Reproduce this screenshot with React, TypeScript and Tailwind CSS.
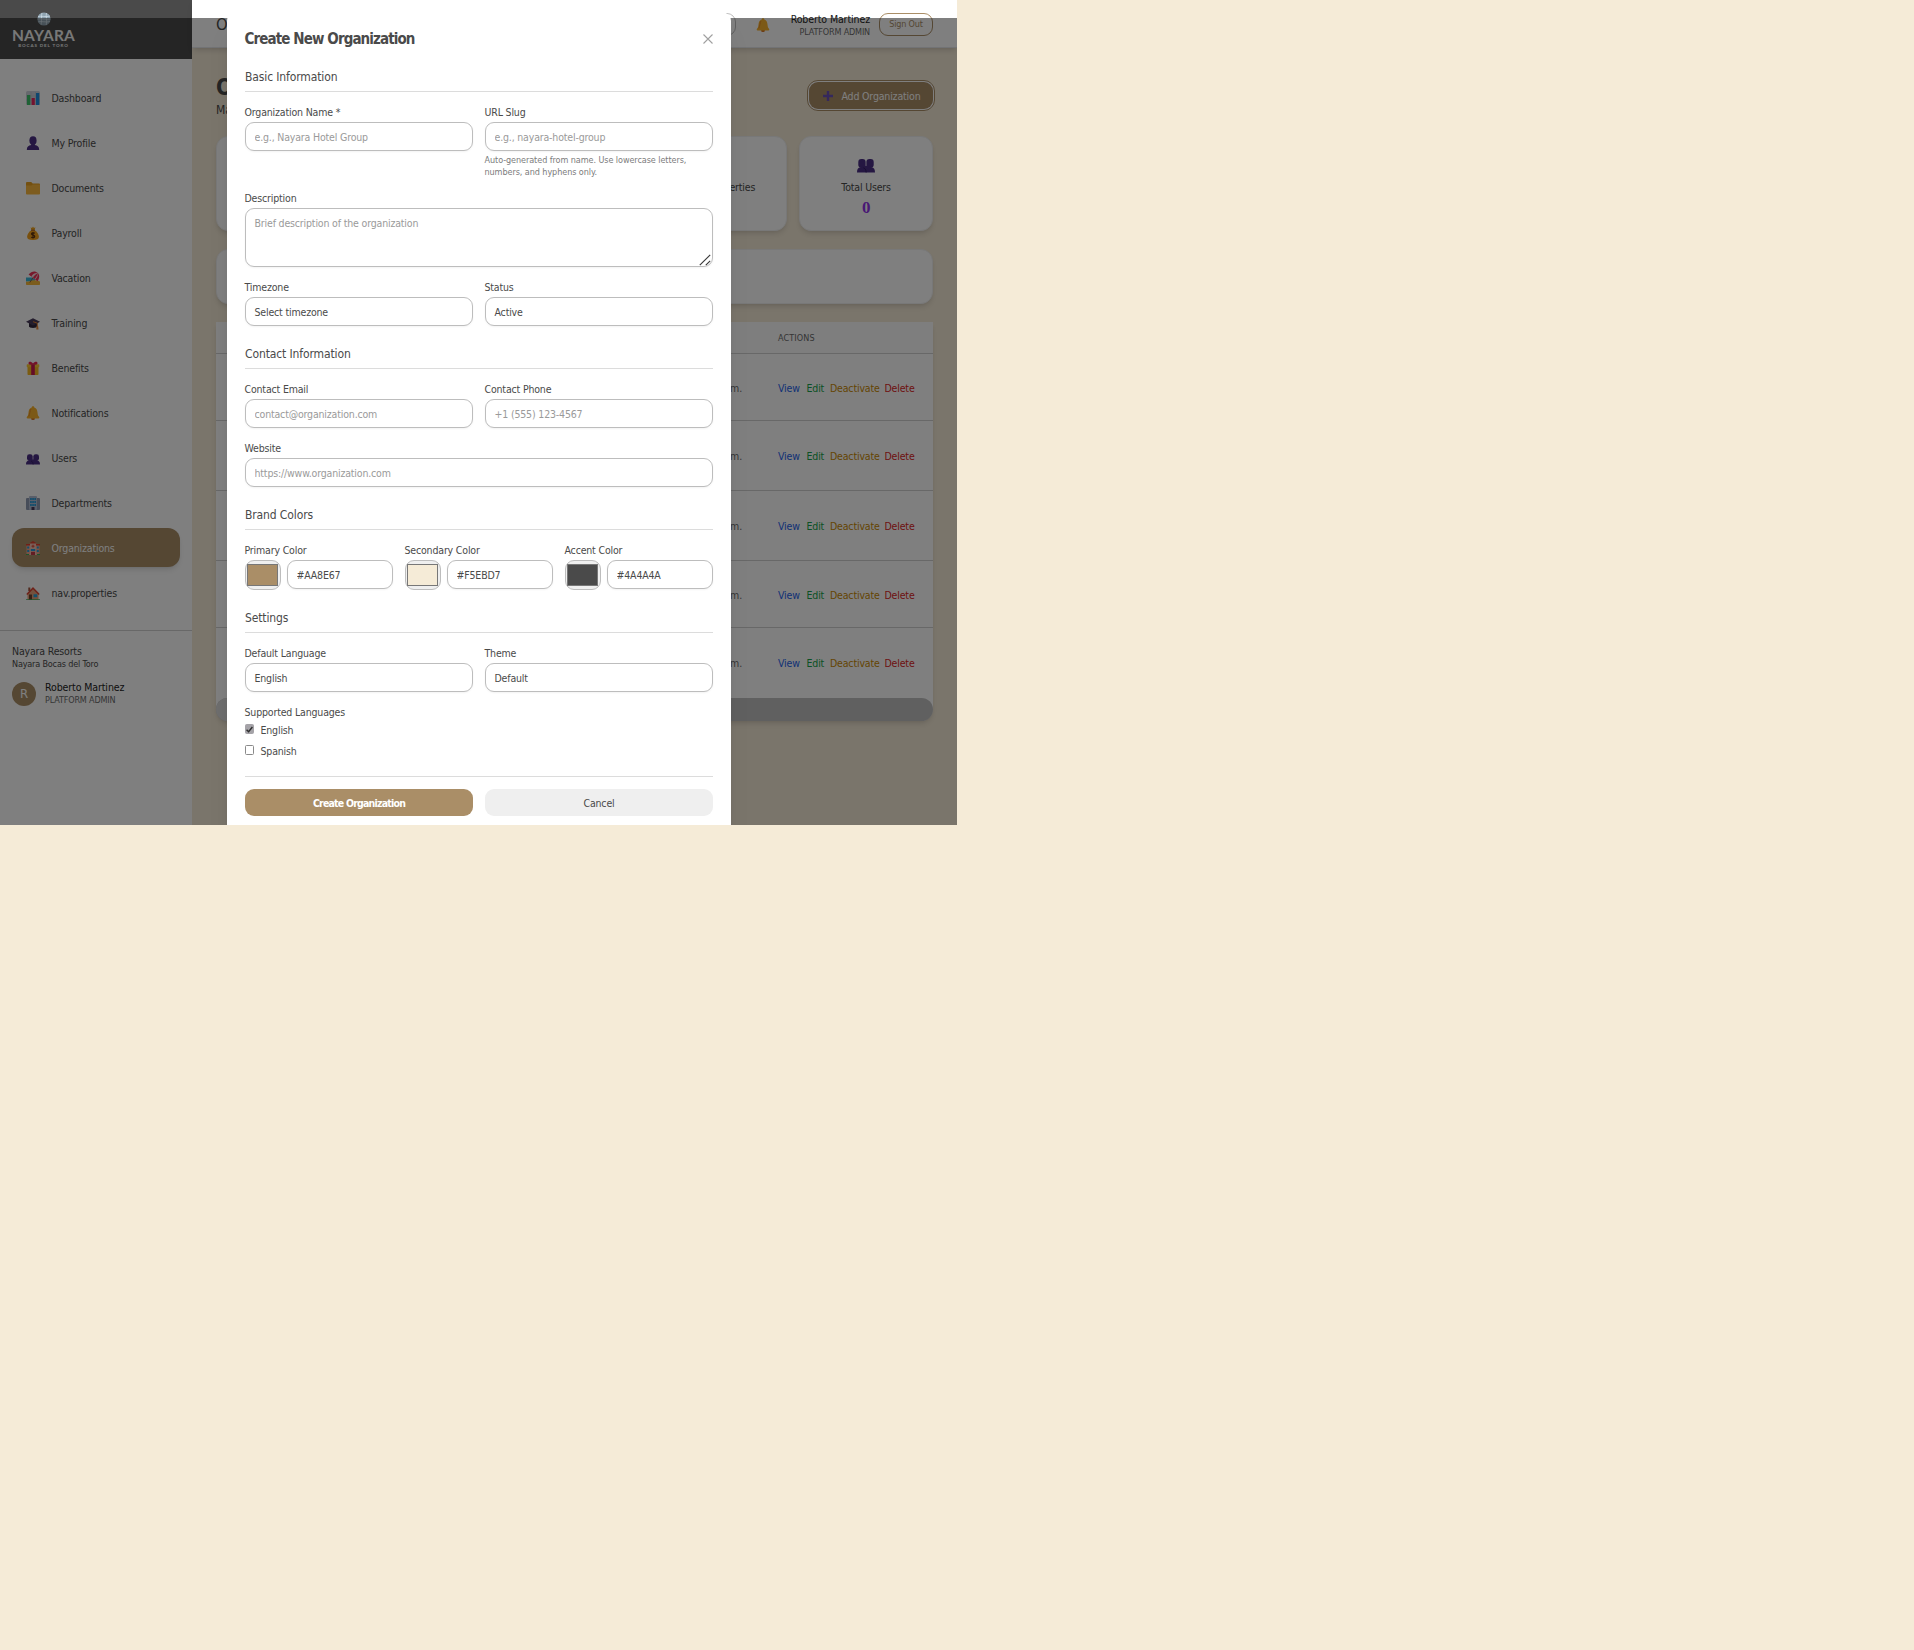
import React from "react";

/* ---------- Icons ---------- */

type IconName =
  | "chart" | "person" | "folder" | "money" | "beach" | "cap"
  | "gift" | "bell" | "people" | "office" | "hotel" | "house" | "plus";

const shapes: Record<IconName, React.ReactNode> = {
  chart: (
    <>
      <rect x="0" y="0" width="14" height="14" rx="1.5" fill="#cfd3dc" />
      <path d="M0 5h14M0 9h14M5 1v13M9.5 1v13" stroke="#b3b8c6" strokeWidth=".5" />
      <rect x="1" y="4" width="3.300" height="10" fill="#3fc46b" />
      <rect x="5.6" y="7" width="3.200" height="7" fill="#e8275f" />
      <rect x="10" y="2" width="3.300" height="12" fill="#1e8fe0" />
    </>
  ),
  person: (
    <>
      <ellipse cx="7" cy="4.6" rx="3.6" ry="4.4" fill="#4b2f85" />
      <path d="M.8 14c0-3.2 1.6-4.4 4.4-4.9V7.5h3.6v1.6c2.8.5 4.4 1.7 4.4 4.9z" fill="#4b2f85" />
    </>
  ),
  folder: (
    <>
      <path d="M0 2.2C0 1.5.5 1 1.2 1h4l1.5 1.6h6.1c.7 0 1.2.5 1.2 1.2V12H0z" fill="#e8a020" />
      <path d="M0 4.6h5.4l1.4-1h7.2v8.8c0 .7-.5 1.2-1.2 1.2H1.2C.5 13.600 0 13.100 0 12.400z" fill="#fbb93e" />
    </>
  ),
  money: (
    <>
      <path d="M4.600 1.200 6 2l1-1.400L8 2l1.400-.8-.9 3.300h-3z" fill="#f0a51f" />
      <path d="M5.300 4.200h3.400c2.400 1.500 4.200 4 4.200 6.500C12.900 13 11 14 7 14s-5.900-1-5.900-3.300c0-2.500 1.800-5 4.200-6.500z" fill="#f3a11d" />
      <rect x="5" y="3.700" width="4" height="1" fill="#a75b22" />
      <path d="M8.800 7.200C8 6.600 5.400 6.500 5.500 8c.1 1.400 3.200.8 3.200 2.400 0 1.500-2.500 1.500-3.500.7M7 5.900v6.700" stroke="#5e3312" strokeWidth="1.200" fill="none" />
    </>
  ),
  beach: (
    <>
      <path d="M0 6.500h9v4H0z" fill="#38b6d8" />
      <path d="M0 10.500c3 1 5-1.500 8-1.200 3 .2 6 .6 6 1.700v2c0 .6-.4 1-1 1H1c-.6 0-1-.4-1-1z" fill="#f7b93a" />
      <path d="m7.500 6-3.700 5.500" stroke="#8d5a3a" strokeWidth=".9" />
      <path d="M2.600 3.600C5.500-.2 9.500-.3 11.800 2c2 2 1.800 5.500-.3 8.200z" fill="#ee3158" />
      <path d="M5.300 5.500c1-2.300 3.700-4 6.500-3.500.3 2.200-.6 4.700-2.600 6.400z" fill="#f7dfe5" />
      <path d="M7 6.700c1-1.900 2.800-3.700 4.800-4.700.2 1.600-1.500 4-3.200 6z" fill="#ee3158" />
    </>
  ),
  cap: (
    <>
      <path d="M3 6.500h8v4.200c-2 1.600-6 1.600-8 0z" fill="#30263d" />
      <path d="M0 5.800 7 2.300l7 3.500-7 3.700z" fill="#493b5b" />
      <path d="m7 5.700 4.300 1.400V12" stroke="#e07b2a" strokeWidth="1" fill="none" />
      <path d="M10.500 10.300h1.700l.3 3.200h-2.200z" fill="#e8893b" />
    </>
  ),
  gift: (
    <>
      <rect x="1.500" y="5" width="11" height="9" rx=".7" fill="#f6b823" />
      <rect x=".7" y="3.200" width="12.600" height="3" rx=".7" fill="#fccb35" />
      <rect x="5.200" y="3.200" width="3.600" height="10.800" fill="#c91850" />
      <path d="M7 3.600C5 4 2.300 3.800 2.500 1.900 2.700.1 5.600.4 7 2.500 8.400.4 11.300.1 11.500 1.900c.2 1.900-2.500 2.100-4.500 1.700z" fill="#e6254f" />
    </>
  ),
  bell: (
    <>
      <ellipse cx="7" cy="12.700" rx="1.900" ry="1.300" fill="#d5721f" />
      <path d="M7 .3c.8 0 1.300.5 1.300 1.200C10.500 2.200 11.300 4 11.500 6.400c.2 2.300.6 3.300 1.500 4.400.6.800.3 1.700-.6 1.700H1.600c-.9 0-1.200-.9-.6-1.700.9-1.100 1.300-2.100 1.500-4.400C2.700 4 3.500 2.200 5.700 1.500 5.700.8 6.200.3 7 .3z" fill="#f9b32d" />
      <path d="M5 3C3.800 4.500 4 8 2.800 10.500" stroke="#e68a24" strokeWidth="1" fill="none" />
    </>
  ),
  people: (
    <>
      <rect x="1" y="3.200" width="5.700" height="6.600" rx="2.300" fill="#4b2f85" />
      <rect x="7.300" y="3.200" width="5.700" height="6.600" rx="2.300" fill="#4b2f85" />
      <path d="M0 13.600c0-2.700.8-3.700 2.600-4.100V8.300h8.800v1.200c1.800.4 2.600 1.400 2.600 4.100z" fill="#4b2f85" />
      <path d="M5 10c1.400.4 2 1.200 2.100 3.600" stroke="#2c1a5c" strokeWidth=".7" fill="none" />
    </>
  ),
  office: (
    <>
      <rect x="0" y="2" width="14" height="12" rx="1" fill="#8f9bb3" />
      <rect x="3" y="0" width="8" height="14" rx="1" fill="#b4bfd4" />
      <path d="M4.200 2h1.500v2H4.200zM6.300 2h1.500v2H6.300zM8.400 2h1.500v2H8.400zM4.200 5h1.500v2H4.200zM6.300 5h1.500v2H6.300zM8.400 5h1.500v2H8.400zM4.200 8h1.500v2H4.200zM6.300 8h1.500v2H6.300zM8.400 8h1.500v2H8.400z" fill="#1798dc" />
      <rect x="5.500" y="11" width="3" height="3" fill="#493b5b" />
    </>
  ),
  hotel: (
    <>
      <rect x=".5" y="4" width="13" height="10" fill="#efa58f" />
      <rect x="3.700" y="2" width="6.600" height="12" fill="#f3c2b3" />
      <path d="M0 3h4v1.500H0zM10 3h4v1.500h-4zM3 2.600 7 0l4 2.600z" fill="#e0402e" />
      <path d="M1.200 5.500h2v2h-2zM1.200 9h2v2h-2zM10.800 5.500h2v2h-2zM10.800 9h2v2h-2zM4.800 8h4.400v2H4.800z" fill="#269bd8" />
      <path d="M7 3.700v3M5.500 5.200h3" stroke="#e0402e" strokeWidth="1" />
      <rect x="5" y="10.800" width="4" height="3.200" fill="#c53b48" />
      <path d="M0 13h3v1H0zM11 13h3v1h-3z" fill="#39a954" />
    </>
  ),
  house: (
    <>
      <path d="M1.500 7 7 2l5.500 5v7h-11z" fill="#e9a37b" />
      <path d="M2.300 1.500h2V5h-2z" fill="#a4573f" />
      <path d="m.3 8 6.200-6.600c.3-.3.700-.3 1 0L13.700 8l-1 .9L7 3.300 1.300 8.900z" fill="#dc4332" />
      <path d="M3 8.500h3V14H3z" fill="#70402b" />
      <path d="M7.500 8.300h3.700v2.900H7.500z" fill="#25a4dd" />
      <path d="M0 13.300h14v.7H0z" fill="#3aaf5b" />
    </>
  ),
  plus: <path d="M5.800 2h2.400v3.800H12v2.400H8.200V12H5.800V8.200H2V5.800h3.800z" fill="#6a50b8" />,
};

function Icon({ name, className = "size-3.5" }: { name: IconName; className?: string }) {
  return (
    <svg viewBox="0 0 14 14" className={`shrink-0 ${className}`} aria-hidden="true">
      {shapes[name]}
    </svg>
  );
}

/* ---------- Sidebar ---------- */

const navItems: { icon: IconName; label: string; active?: boolean }[] = [
  { icon: "chart", label: "Dashboard" },
  { icon: "person", label: "My Profile" },
  { icon: "folder", label: "Documents" },
  { icon: "money", label: "Payroll" },
  { icon: "beach", label: "Vacation" },
  { icon: "cap", label: "Training" },
  { icon: "gift", label: "Benefits" },
  { icon: "bell", label: "Notifications" },
  { icon: "people", label: "Users" },
  { icon: "office", label: "Departments" },
  { icon: "hotel", label: "Organizations", active: true },
  { icon: "house", label: "nav.properties" },
];

function Logo() {
  return (
    <div className="flex w-[63px] flex-col items-center font-[Lato] text-[#f0f0f0]">
      <svg viewBox="0 0 14 14" className="size-3.5">
        <circle cx="7" cy="7" r="6.600" fill="#8fa3b0" />
        <path d="M1 4.500c3-1 8 1 12-.5M.5 7c4-1 9 1 13 0M1.300 9.800c3-1 8 1 11.600-.3M5 .8C4 4 5 9 4 12.800M9.500 1c-1 3 1 8-.3 12" stroke="#dce9f2" strokeWidth=".6" fill="none" />
      </svg>
      <div className="mt-px text-[15.500px] leading-[16px] font-bold tracking-[0.2px]">NAYARA</div>
      <div className="text-[4.500px] leading-[5px] font-bold tracking-[0.9px] whitespace-nowrap">BOCAS DEL TORO</div>
    </div>
  );
}

function Sidebar() {
  return (
    <aside className="flex w-48 shrink-0 flex-col bg-white">
      <div className="flex h-[59px] items-start bg-[#4a4a4a] pt-3 pl-3">
        <Logo />
      </div>
      <nav className="flex flex-col gap-1.5 px-3 pt-[19px] pb-[18px]">
        {navItems.map((item) => (
          <div
            key={item.label}
            className={`flex h-[39px] items-center gap-[11.500px] rounded-xl pl-3.5 ${
              item.active ? "bg-[#aa8e67] text-white shadow-md" : ""
            }`}
          >
            <Icon name={item.icon} className="mt-px size-3.5" />
            <span className="pt-0.5">{item.label}</span>
          </div>
        ))}
      </nav>
      <div className="border-t border-[#d1d1d1] px-3 pt-3">
        <div className="mt-0.5 leading-[13px]">Nayara Resorts</div>
        <div className="text-[9px] leading-3">Nayara Bocas del Toro</div>
        <div className="mt-[11px] flex items-center gap-[9px]">
          <div className="flex size-6 items-center justify-center rounded-full bg-[#aa8e67] text-[13px] text-white">R</div>
          <div>
            <div className="leading-[13px] tracking-[-0.1px] text-[#222222]">Roberto Martinez</div>
            <div className="text-[9px] leading-3 text-[#6b6b6b]">PLATFORM ADMIN</div>
          </div>
        </div>
      </div>
    </aside>
  );
}

/* ---------- Page behind the dialog ---------- */

function TopBar() {
  return (
    <header className="z-10 flex h-12 shrink-0 items-start border-b border-[#e5e7eb] bg-white px-6 shadow-md">
      <div className="pt-3.5 text-[16.500px] leading-[22px]">Organizations</div>
      <div className="mt-[13px] ml-auto h-[23px] w-40 rounded-[9px] border border-[#bdbdbd]" />
      <Icon name="bell" className="mt-[18px] ml-5 size-3.5" />
      <div className="mt-[13px] w-[100px] text-right">
        <div className="leading-[13px] tracking-[-0.1px] text-[#222222]">Roberto Martinez</div>
        <div className="text-[9px] leading-3 text-[#6b6b6b]">PLATFORM ADMIN</div>
      </div>
      <div className="mt-[13px] ml-[9px] flex h-[23px] w-[54px] items-center justify-center rounded-[9px] border border-[#aa8e67] text-[9px] text-[#aa8e67]">
        Sign Out
      </div>
    </header>
  );
}

const stats: { icon: IconName; label: string }[] = [
  { icon: "hotel", label: "Organizations" },
  { icon: "chart", label: "Active" },
  { icon: "office", label: "Inactive" },
  { icon: "house", label: "Total Properties" },
  { icon: "people", label: "Total Users" },
];

const rowHeights = ["h-[67px] pt-[3px]", "h-[70px] pt-[3px]", "h-[70px] pt-[3px]", "h-[67px] pt-[3px]", "h-[70px] pt-px"];

function Page() {
  return (
    <main className="flex min-w-0 flex-1 flex-col">
      <TopBar />
      <div className="flex flex-1 flex-col px-6">
        <div className="mt-[25px] flex h-[46px] items-start justify-between">
          <div>
            <h1 className="text-[22.500px] leading-[28px] font-bold">Organizations</h1>
            <p className="text-xs leading-[19px]">Manage organizations</p>
          </div>
          <button className="mt-[9px] flex h-[27px] w-[124px] items-center rounded-[9px] bg-[#aa8e67] pl-3 text-white ring-[1.500px] ring-white outline-[1.500px] outline-offset-[1.500px] outline-[#aa8e67]">
            <Icon name="plus" />
            <span className="ml-[6.500px] pt-0.5">Add Organization</span>
          </button>
        </div>
        <div className="mt-[17px] grid grid-cols-5 gap-3">
          {stats.map((s) => (
            <div key={s.label} className="flex h-[95px] flex-col items-center rounded-xl border border-[#f0f0f0] bg-white pt-[18px] shadow-md">
              <Icon name={s.icon} className="size-[18px]" />
              <div className="mt-[7px] leading-[15px] whitespace-nowrap">{s.label}</div>
              <div className="mt-1 font-['Liberation_Serif'] text-[17px] leading-[18px] font-bold text-[#9333ea]">0</div>
            </div>
          ))}
        </div>
        <div className="mt-[18px] h-[55px] rounded-xl border border-[#f0f0f0] bg-white shadow-md" />
        <div className="mt-[18px] rounded-b-xl bg-white shadow-md">
          <div className="flex h-8 items-center border-b border-[#d1d1d1] bg-[#fcfcfc] pt-[3px] pl-[562px] text-[9px] tracking-[0.1px] text-[#6b6b6b]">
            ACTIONS
          </div>
          {rowHeights.map((h, i) => (
            <div
              key={i}
              className={`flex items-center ${h} ${i < 4 ? "border-b border-[#d1d1d1]" : ""}`}
            >
              <span className="w-[526px] text-right text-[#6b6b6b]">9:00 a. m.</span>
              <span className="ml-9 w-[28.500px] text-[#2563eb]">View</span>
              <span className="w-[23.500px] text-[#16a34a]">Edit</span>
              <span className="w-[54.500px] text-[#ca8a04]">Deactivate</span>
              <span className="text-[#dc2626]">Delete</span>
            </div>
          ))}
          <div className="h-[23px] rounded-xl bg-[#c1c1c1]">
            <div className="h-full w-[400px] rounded-l-xl bg-[#dcdcdc]" />
          </div>
        </div>
      </div>
    </main>
  );
}

/* ---------- Dialog ---------- */

function Heading({ children }: { children: React.ReactNode }) {
  return (
    <h3 className="mb-3 h-6 border-b border-[#dcdcdc] text-xs leading-[18px] tracking-[-0.01em]">{children}</h3>
  );
}

function Field({ label, children }: { label: string; children: React.ReactNode }) {
  return (
    <div className="min-w-0">
      <div className="-ml-[0.500px] mb-[3px] h-[15px] pt-px leading-[15px] whitespace-nowrap">{label}</div>
      {children}
    </div>
  );
}

function TextInput({ placeholder, value }: { placeholder?: string; value?: string }) {
  return (
    <input
      className="block h-[29px] w-full min-w-0 rounded-[9px] border border-[#bdbdbd] bg-white px-[8.500px] pt-px shadow-xs placeholder:text-[#9a9a9a]"
      placeholder={placeholder}
      defaultValue={value}
    />
  );
}

function SelectBox({ value }: { value: string }) {
  return (
    <div className="flex h-[29px] items-center rounded-[9px] border border-[#bdbdbd] bg-white px-[8.500px] pt-[3px] shadow-xs">
      {value}
    </div>
  );
}

function ColorField({ label, value, swatch }: { label: string; value: string; swatch: string }) {
  return (
    <Field label={label}>
      <div className="flex h-[30px] items-start gap-1.5">
        <div className="flex h-[30px] w-9 shrink-0 items-center rounded-[9px] border border-[#bdbdbd] bg-[#efefef] pl-px">
          <div className={`h-[22px] w-[31px] border border-[#777777] ${swatch}`} />
        </div>
        <TextInput value={value} />
      </div>
    </Field>
  );
}

function CheckRow({ label, checked }: { label: string; checked?: boolean }) {
  return (
    <div className="flex h-[15px] items-start gap-[6.500px]">
      <span
        className={`mt-0.5 flex h-2.5 w-[9px] items-center justify-center rounded-[1.500px] border ${
          checked ? "border-[#a5a3a8] bg-[#a5a3a8]" : "border-[#8a8a8a] bg-white"
        }`}
      >
        {checked && (
          <svg viewBox="0 0 9 9" className="size-[9px] shrink-0">
            <path d="M1.600 4.800 3.600 6.800 7.400 2" stroke="#2e2e2e" strokeWidth="1.400" fill="none" />
          </svg>
        )}
      </span>
      <span className="pt-px leading-[15px]">{label}</span>
    </div>
  );
}

function Dialog() {
  return (
    <div className="absolute top-3 left-[227px] z-30 h-[813px] w-[504px] rounded-t-[9px] bg-white px-[18px] pt-[18px] shadow-xl">
      <div className="mb-5 flex h-[18px] items-center justify-between">
        <h2 className="-ml-[0.500px] text-[15px] font-bold tracking-[-0.060em]">Create New Organization</h2>
        <svg viewBox="0 0 12 12" className="-mr-px size-3">
          <path d="m1.500 1.500 9 9M10.500 1.500l-9 9" stroke="#a0a0a0" strokeWidth="1.100" />
        </svg>
      </div>

      <section>
        <Heading>Basic Information</Heading>
        <div className="grid h-[74px] grid-cols-2 gap-3">
          <Field label="Organization Name *">
            <TextInput placeholder="e.g., Nayara Hotel Group" />
          </Field>
          <Field label="URL Slug">
            <TextInput placeholder="e.g., nayara-hotel-group" />
            <p className="mt-[3px] -ml-[0.500px] text-[9px] leading-3 tracking-[-0.008em] text-[#7c7c7c]">
              Auto-generated from name. Use lowercase letters,
              <br />
              numbers, and hyphens only.
            </p>
          </Field>
        </div>
        <div className="mt-3">
          <Field label="Description">
            <div className="relative">
              <textarea
                className="block h-[59px] w-full resize-none rounded-[9px] border border-[#bdbdbd] px-[8.500px] py-[7px] leading-[15px] shadow-xs placeholder:text-[#9a9a9a]"
                placeholder="Brief description of the organization"
              />
              <svg viewBox="0 0 12 12" className="absolute right-[2px] bottom-[1px] size-3">
                <path d="M.8 11.200 11.200.800M6.800 11.200l4.400-4.400" stroke="#3a3a3a" strokeWidth="1.200" />
              </svg>
            </div>
          </Field>
        </div>
        <div className="mt-3 grid grid-cols-2 gap-3">
          <Field label="Timezone"><SelectBox value="Select timezone" /></Field>
          <Field label="Status"><SelectBox value="Active" /></Field>
        </div>
      </section>

      <section className="mt-[19px]">
        <Heading>Contact Information</Heading>
        <div className="grid grid-cols-2 gap-3">
          <Field label="Contact Email"><TextInput placeholder="contact@organization.com" /></Field>
          <Field label="Contact Phone"><TextInput placeholder="+1 (555) 123-4567" /></Field>
        </div>
        <div className="mt-3">
          <Field label="Website"><TextInput placeholder="https://www.organization.com" /></Field>
        </div>
      </section>

      <section className="mt-[19px]">
        <Heading>Brand Colors</Heading>
        <div className="grid grid-cols-3 gap-3">
          <ColorField label="Primary Color" value="#AA8E67" swatch="bg-[#aa8e67]" />
          <ColorField label="Secondary Color" value="#F5EBD7" swatch="bg-[#f5ebd7]" />
          <ColorField label="Accent Color" value="#4A4A4A" swatch="bg-[#4a4a4a]" />
        </div>
      </section>

      <section className="mt-[19px]">
        <Heading>Settings</Heading>
        <div className="grid grid-cols-2 gap-3">
          <Field label="Default Language"><SelectBox value="English" /></Field>
          <Field label="Theme"><SelectBox value="Default" /></Field>
        </div>
        <div className="mt-3">
          <Field label="Supported Languages">
            <div className="flex flex-col gap-1.5">
              <CheckRow label="English" checked />
              <CheckRow label="Spanish" />
            </div>
          </Field>
        </div>
      </section>

      <div className="mt-[18px] grid grid-cols-2 gap-3 border-t border-[#dcdcdc] pt-3">
        <button className="h-[27px] rounded-[9px] bg-[#aa8e67] pt-0.5 font-bold tracking-[-0.075em] text-white">
          Create Organization
        </button>
        <button className="h-[27px] rounded-[9px] bg-[#efefef] pt-0.5">Cancel</button>
      </div>
    </div>
  );
}

export default function App() {
  return (
    <div className="min-h-[1650px] bg-[#f5ebd7]">
      <div className="relative flex h-[825px] w-[957px] overflow-hidden font-['DejaVu_Sans_Condensed','DejaVu_Sans',sans-serif] text-[10.500px] tracking-[-0.016em] text-[#4a4a4a] [font-stretch:condensed]">
        <Sidebar />
        <Page />
        <div className="absolute inset-x-0 top-[18px] bottom-0 z-20 bg-black/50" />
        <Dialog />
      </div>
    </div>
  );
}
